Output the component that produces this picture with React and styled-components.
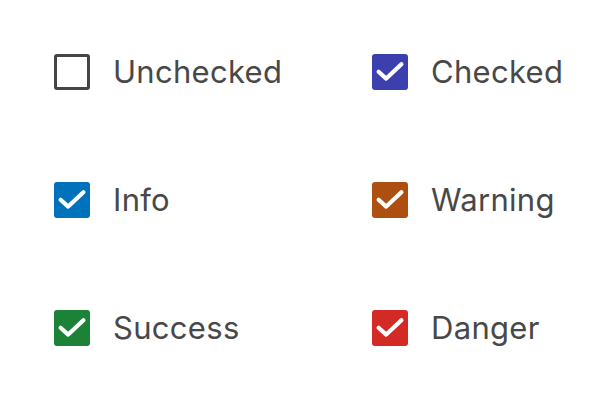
import React, { useState } from 'react';
import styled, { createGlobalStyle } from 'styled-components';

const GlobalStyle = createGlobalStyle`
  html, body {
    margin: 0;
    padding: 0;
    background: #fff;
  }
  body {
    font-family: Inter, 'Noto Sans', sans-serif;
  }
`;

const Grid = styled.div`
  display: grid;
  grid-template-columns: 318px 242px;
  row-gap: 92px;
  padding: 54px 0 0 54px;
`;

const Label = styled.label`
  display: flex;
  align-items: flex-start;
  gap: 23px;
  cursor: pointer;
  color: #484848;
  font-size: 31px;
  line-height: 36px;
  letter-spacing: 0.3px;
  user-select: none;
`;

const Box = styled.span`
  flex: none;
  box-sizing: border-box;
  width: 36px;
  height: 36px;
  border-radius: 3px;
  border: 3px solid ${(p) => (p.checked ? p.color : '#454545')};
  background: ${(p) => (p.checked ? p.color : '#fff')};
  display: block;
`;

const CheckIcon = styled.svg`
  display: block;
  width: 30px;
  height: 30px;
  overflow: visible;
`;

// viewBox offset so path coords are relative to the outer box edge
const Check = () => (
  <CheckIcon viewBox="3 3 30 30">
    <path
      d="M6.6 17.8 L14.2 24.6 L29.4 10.2"
      fill="none"
      stroke="#fff"
      strokeWidth="4.2"
      strokeLinecap="round"
      strokeLinejoin="round"
    />
  </CheckIcon>
);

const items = [
  { label: 'Unchecked', color: '#3c40ae', checked: false },
  { label: 'Checked', color: '#3c40ae', checked: true },
  { label: 'Info', color: '#0071bb', checked: true },
  { label: 'Warning', color: '#ae4f12', checked: true },
  { label: 'Success', color: '#1b8237', checked: true },
  { label: 'Danger', color: '#d42a26', checked: true },
];

const Checkbox = ({ label, color, initial }) => {
  const [on, setOn] = useState(initial);
  return (
    <Label onClick={() => setOn(!on)}>
      <Box checked={on} color={color}>
        {on && <Check />}
      </Box>
      {label}
    </Label>
  );
};

export default function App() {
  return (
    <>
      <GlobalStyle />
      <Grid>
        {items.map((it) => (
          <Checkbox key={it.label} label={it.label} color={it.color} initial={it.checked} />
        ))}
      </Grid>
    </>
  );
}
